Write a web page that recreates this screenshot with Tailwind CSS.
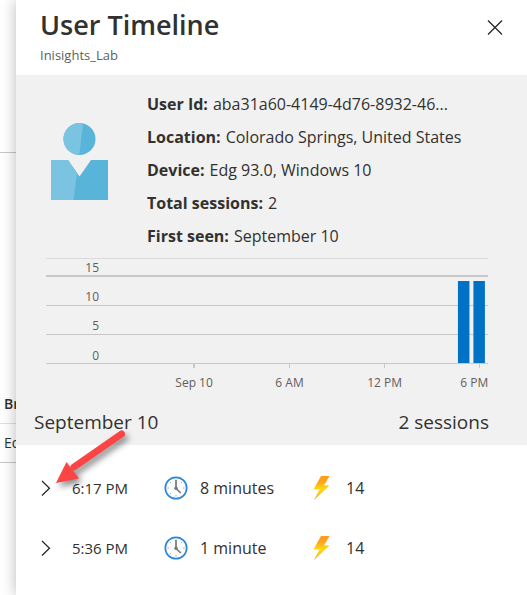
<!DOCTYPE html>
<html lang="en">
<head>
<meta charset="utf-8">
<meta name="viewport" content="width=device-width, initial-scale=1">
<title>User Timeline</title>
<script src="https://cdn.jsdelivr.net/npm/@tailwindcss/browser@4"></script>
</head>
<body class="flex min-h-screen overflow-x-hidden bg-white font-['Open_Sans','Noto_Sans',sans-serif] text-[#323130]">
  <!-- Page behind the panel -->
  <div class="flex w-4 shrink-0 flex-col overflow-hidden whitespace-nowrap text-sm">
    <div class="h-[153px] border-b border-[#c8c8c8]"></div>
    <div class="h-[231px]"></div>
    <div class="flex h-10 items-center border-b border-[#e1dfdd] pl-1 font-semibold">Browser</div>
    <div class="flex h-[39px] items-center border-b border-[#c8c8c8] pl-1">Edg 93.0</div>
  </div>

  <main class="relative min-w-0 flex-1 bg-white shadow-[0_0_14px_rgba(0,0,0,0.28)]">
    <header class="flex h-[75px] items-start justify-between pl-6 pr-6">
      <div>
        <h1 class="pt-[7px] text-[27px] leading-9 font-semibold">User Timeline</h1>
        <p class="text-[13px] leading-6 text-[#605e5c]">Inisights_Lab</p>
      </div>
      <button type="button" aria-label="Close" class="mt-5 p-0">
        <svg class="size-4" viewBox="0 0 16 16" fill="none" stroke="#222" stroke-width="1.2"><path d="M1 0.5 15 14.5M15 0.5 1 14.5"/></svg>
      </button>
    </header>

    <section class="bg-[#f1f1f1]">
      <div class="flex pt-[13px]">
        <svg class="mt-[35px] ml-[34px] h-[77px] w-[59px] shrink-0" viewBox="0 0 59 77">
          <circle cx="29.500" cy="16" r="16" fill="#59b4d9"/>
          <path d="M33 0.400A16 16 0 1 0 29.300 32Z" fill="#7ac3e1"/>
          <path d="M1 37H18L29.500 53.500 41 37H58V77H1Z" fill="#59b4d9"/>
          <path d="M1 37H18L27 50 23.500 77H1Z" fill="#7ac3e1"/>
        </svg>
        <dl class="ml-[38px] min-w-0 text-base leading-[33px]">
          <div class="flex gap-[5px]"><dt class="font-bold">User Id:</dt><dd>aba31a60-4149-4d76-8932-46...</dd></div>
          <div class="flex gap-[5px]"><dt class="font-bold">Location:</dt><dd>Colorado Springs, United States</dd></div>
          <div class="flex gap-[5px]"><dt class="font-bold">Device:</dt><dd>Edg 93.0, Windows 10</dd></div>
          <div class="flex gap-[5px]"><dt class="font-bold">Total sessions:</dt><dd>2</dd></div>
          <div class="flex gap-[5px]"><dt class="font-bold">First seen:</dt><dd>September 10</dd></div>
        </dl>
      </div>

      <div class="mt-[5px] mr-[39px] ml-[30px]">
        <svg class="block h-[142px] w-full overflow-visible text-xs" role="img" aria-label="Events per hour">
          <g stroke="#c8c8c8" shape-rendering="crispEdges">
            <line x1="0" x2="100%" y1="0.500" y2="0.500" stroke="#dadada"/>
            <line x1="0" x2="100%" y1="18" y2="18" stroke-width="2"/>
            <line x1="0" x2="100%" y1="47.500" y2="47.500"/>
            <line x1="0" x2="100%" y1="76.500" y2="76.500"/>
            <line x1="0" x2="100%" y1="105.500" y2="105.500"/>
            <line x1="33.500%" x2="33.500%" y1="106" y2="110" stroke-width="2"/>
            <line x1="55.100%" x2="55.100%" y1="106" y2="110"/>
            <line x1="76.600%" x2="76.600%" y1="106" y2="110"/>
            <line x1="98.100%" x2="98.100%" y1="106" y2="110"/>
          </g>
          <g fill="#0072c6">
            <rect x="93.200%" y="23" width="2.600%" height="82"/>
            <rect x="96.700%" y="23" width="2.600%" height="82"/>
          </g>
          <g fill="#605e5c" text-anchor="end">
            <text x="53" y="14">15</text>
            <text x="53" y="43">10</text>
            <text x="53" y="72">5</text>
            <text x="53" y="102">0</text>
          </g>
          <g fill="#605e5c" text-anchor="middle">
            <text x="33.500%" y="129">Sep 10</text>
            <text x="55.100%" y="129">6 AM</text>
            <text x="76.600%" y="129">12 PM</text>
            <text x="96.900%" y="129">6 PM</text>
          </g>
        </svg>
      </div>

      <div class="flex h-[45px] items-center justify-between pr-[38px] pl-[18px] text-[19px]">
        <h2>September 10</h2>
        <span>2 sessions</span>
      </div>
    </section>

    <svg width="0" height="0" class="absolute" aria-hidden="true">
      <defs>
        <linearGradient id="boltFill" x1="0" y1="0" x2="0" y2="1">
          <stop offset="0" stop-color="#ff9a1a"/><stop offset="0.250" stop-color="#fca51b"/><stop offset="0.550" stop-color="#ffd90f"/><stop offset="0.750" stop-color="#ffc814"/><stop offset="1" stop-color="#f9952a"/>
        </linearGradient>
        <symbol id="clock" viewBox="0 0 24 24">
          <circle cx="12" cy="12" r="10.700" fill="#fcfcfc" stroke="#2b88dc" stroke-width="1.700"/>
          <path d="M12 3.500v1.300M12 19.200v1.300M3.500 12h1.300M19.200 12h1.300M6 6l.8.8M17.200 6.800 18 6M6 18l.8-.8" stroke="#999" stroke-width="1"/>
          <path d="M12 4V12.500L16.800 17" fill="none" stroke="#777" stroke-width="1.700"/>
          <circle cx="12" cy="12.300" r="1.700" fill="#777"/>
        </symbol>
        <symbol id="bolt" viewBox="0 0 17 24">
          <path d="M8 0H16.500L11 9.500H16.500L1 24 6.500 13.500H.5Z" fill="url(#boltFill)"/>
        </symbol>
      </defs>
    </svg>

    <ul class="pt-[13px] text-base">
      <li class="flex h-[60px] items-center">
        <button type="button" aria-label="Expand 6:17 PM session" class="ml-6 w-8 p-0">
          <svg class="h-4 w-3" viewBox="0 0 12 16" fill="none" stroke="#222" stroke-width="1.200"><path d="M2 1 9.500 8.200 2 15.500"/></svg>
        </button>
        <span class="w-[92px] text-[15px]">6:17 PM</span>
        <svg class="mr-3 size-6"><use href="#clock"/></svg>
        <span class="w-[113px]">8 minutes</span>
        <svg class="mr-4 h-6 w-[17px]"><use href="#bolt"/></svg>
        <span>14</span>
      </li>
      <li class="flex h-[60px] items-center">
        <button type="button" aria-label="Expand 5:36 PM session" class="ml-6 w-8 p-0">
          <svg class="h-4 w-3" viewBox="0 0 12 16" fill="none" stroke="#222" stroke-width="1.200"><path d="M2 1 9.500 8.200 2 15.500"/></svg>
        </button>
        <span class="w-[92px] text-[15px]">5:36 PM</span>
        <svg class="mr-3 size-6"><use href="#clock"/></svg>
        <span class="w-[113px]">1 minute</span>
        <svg class="mr-4 h-6 w-[17px]"><use href="#bolt"/></svg>
        <span>14</span>
      </li>
    </ul>

    <!-- Callout arrow -->
    <svg class="pointer-events-none absolute top-[425px] left-8 h-[70px] w-[90px] drop-shadow-[3px_4px_3px_rgba(0,0,0,0.45)]" viewBox="0 0 90 70" aria-hidden="true">
      <path d="M26 42 73.500 9" stroke="#fb4545" stroke-width="7" stroke-linecap="round"/>
      <path d="M8 58 18.500 37 31 53.500Z" fill="#fb4545"/>
    </svg>
  </main>
</body>
</html>
